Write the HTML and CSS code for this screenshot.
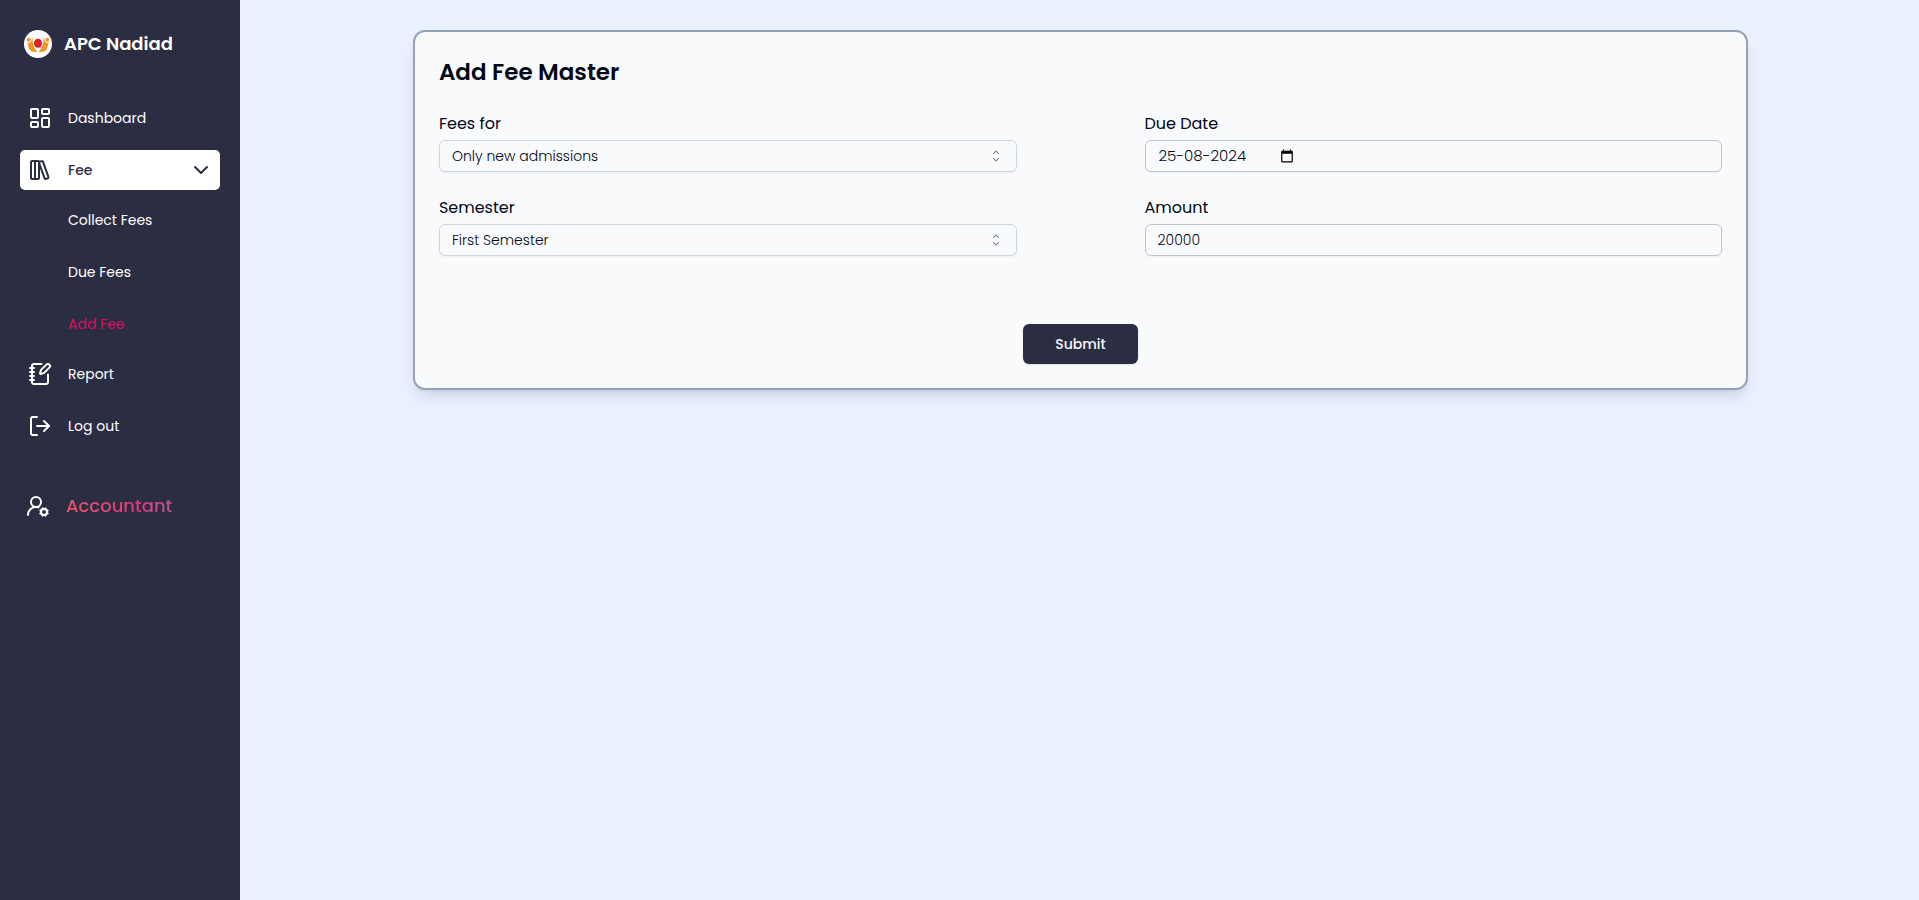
FILE: index.html
```html
<!DOCTYPE html>
<html lang="en">
<head>
<meta charset="utf-8">
<meta name="viewport" content="width=device-width, initial-scale=1">
<title>APC Nadiad - Add Fee</title>
<link rel="stylesheet" href="styles.css">
</head>
<body>
<div class="layout">
  <aside class="sidebar">
    <div class="brand">
      <svg class="brand-logo" viewBox="0 0 28 28" aria-hidden="true">
        <circle cx="14" cy="14" r="14" fill="#fff"/>
        <ellipse cx="14" cy="13.300" rx="4" ry="4.500" fill="#e31e24"/>
        <g fill="#f7941d">
          <circle cx="4.700" cy="9.800" r="2"/>
          <circle cx="23.300" cy="9.800" r="2"/>
          <path d="M3 12.400c1.700 1 3.400.4 4.200-1.400L8.800 6.800c-.7 5.800.4 10.400 4.700 14.800-3.700 1-6.900 0-8.300-2.600C4.400 17 4.200 14 3 12.400z"/>
          <path d="M25 12.400c-1.700 1-3.400.4-4.200-1.400L19.200 6.800c.7 5.800-.4 10.400-4.700 14.800 3.700 1 6.900 0 8.300-2.600.8-2 1-5 2.200-6.600z"/>
        </g>
      </svg>
      <span class="brand-name">APC Nadiad</span>
    </div>
    <nav class="nav" aria-label="Main">
      <a class="nav-item" href="#dashboard">
        <svg class="icon" viewBox="0 0 24 24" aria-hidden="true"><rect width="7" height="9" x="3" y="3" rx="1"/><rect width="7" height="5" x="14" y="3" rx="1"/><rect width="7" height="9" x="14" y="12" rx="1"/><rect width="7" height="5" x="3" y="16" rx="1"/></svg>
        <span>Dashboard</span>
      </a>
      <div class="nav-group">
        <button class="nav-item nav-item-open" type="button" aria-expanded="true">
          <svg class="icon" viewBox="0 0 24 24" aria-hidden="true"><rect width="8" height="18" x="3" y="3" rx="1"/><path d="M7 3v18"/><path d="M20.400 18.900c.2.5-.1 1.100-.6 1.300l-1.900.7c-.5.2-1.100-.1-1.300-.6L11.100 5.100c-.2-.5.1-1.100.6-1.300l1.900-.7c.5-.2 1.100.1 1.300.6Z"/></svg>
          <span>Fee</span>
          <svg class="icon icon-end" viewBox="0 0 24 24" aria-hidden="true"><path d="m6 9 6 6 6-6"/></svg>
        </button>
        <div class="subnav">
          <a class="subnav-item" href="#collect">Collect Fees</a>
          <a class="subnav-item" href="#due">Due Fees</a>
          <a class="subnav-item subnav-item-current" href="#add" aria-current="page">Add Fee</a>
        </div>
      </div>
      <a class="nav-item" href="#report">
        <svg class="icon" viewBox="0 0 24 24" aria-hidden="true"><path d="M13.400 2H6a2 2 0 0 0-2 2v16a2 2 0 0 0 2 2h12a2 2 0 0 0 2-2v-7.400"/><path d="M2 6h4"/><path d="M2 10h4"/><path d="M2 14h4"/><path d="M2 18h4"/><path d="M21.378 5.626a1 1 0 1 0-3.004-3.004l-5.010 5.012a2 2 0 0 0-.506.854l-.837 2.870a.5.5 0 0 0 .62.62l2.870-.837a2 2 0 0 0 .854-.506z"/></svg>
        <span>Report</span>
      </a>
      <a class="nav-item" href="#logout">
        <svg class="icon" viewBox="0 0 24 24" aria-hidden="true"><path d="M9 21H5a2 2 0 0 1-2-2V5a2 2 0 0 1 2-2h4"/><path d="m16 17 5-5-5-5"/><path d="M21 12H9"/></svg>
        <span>Log out</span>
      </a>
    </nav>
    <div class="role">
      <svg class="icon" viewBox="0 0 24 24" aria-hidden="true"><path d="M2 21a8 8 0 0 1 10.434-7.620"/><circle cx="10" cy="8" r="5"/><circle cx="18" cy="18" r="3"/><path d="m19.500 14.300-.4.9"/><path d="m16.900 20.800-.4.9"/><path d="m21.700 19.500-.9-.4"/><path d="m15.200 16.900-.9-.4"/><path d="m21.700 16.500-.9.4"/><path d="m15.200 19.100-.9.4"/><path d="m19.500 21.700-.4-.9"/><path d="m16.900 15.200-.4-.9"/></svg>
      <span class="role-name">Accountant</span>
    </div>
  </aside>
  <main class="main">
    <form class="card">
      <h1 class="card-title">Add Fee Master</h1>
      <div class="fields">
        <div class="field">
          <label class="label" for="fees-for">Fees for</label>
          <div class="select-wrap">
            <select class="control control-select" id="fees-for"><option>Only new admissions</option></select>
            <svg class="caret" viewBox="0 0 15 15" aria-hidden="true"><path d="M4.900 5.400 7.500 2.800l2.600 2.600M4.900 9.600l2.600 2.600 2.600-2.600"/></svg>
          </div>
        </div>
        <div class="field">
          <label class="label" for="due-date">Due Date</label>
          <div class="control control-date">
            <input class="date-input" id="due-date" type="text" inputmode="numeric" value="25-08-2024">
            <button class="date-button" type="button" aria-label="Open calendar">
              <svg class="date-icon" viewBox="0 0 24 24" aria-hidden="true"><path d="M20 3h-1V1h-2v2H7V1H5v2H4c-1.100 0-2 .9-2 2v16c0 1.100.9 2 2 2h16c1.100 0 2-.9 2-2V5c0-1.100-.9-2-2-2zm0 18H4V8h16v13z"/></svg>
            </button>
          </div>
        </div>
        <div class="field">
          <label class="label" for="semester">Semester</label>
          <div class="select-wrap">
            <select class="control control-select" id="semester"><option>First Semester</option></select>
            <svg class="caret" viewBox="0 0 15 15" aria-hidden="true"><path d="M4.900 5.400 7.500 2.800l2.600 2.600M4.900 9.600l2.600 2.600 2.600-2.600"/></svg>
          </div>
        </div>
        <div class="field">
          <label class="label" for="amount">Amount</label>
          <input class="control" id="amount" type="text" inputmode="numeric" value="20000">
        </div>
      </div>
      <button class="submit" type="submit">Submit</button>
    </form>
  </main>
</div>
</body>
</html>
```
FILE: styles.css
```css
* { box-sizing: border-box; }

body {
  margin: 0;
  font-family: Poppins, Inter, "Liberation Sans", sans-serif;
  font-size: 14px;
  line-height: 24px;
  color: #020817;
}

button, input, select { font: inherit; color: inherit; }

.layout {
  display: flex;
  min-height: 100vh;
  background: #e9f1ff;
}

.sidebar {
  flex: none;
  width: 240px;
  padding: 30px 20px;
  background: #2b2d42;
  color: #fff;
}

.brand {
  display: flex;
  align-items: center;
  gap: 12px;
  padding-left: 4px;
  margin-bottom: 40px;
}

.brand-logo { width: 28px; height: 28px; }

.brand-name { font-size: 18px; font-weight: 600; }

.nav {
  display: flex;
  flex-direction: column;
  gap: 12px;
}

.nav-item {
  display: flex;
  align-items: center;
  gap: 16px;
  width: 100%;
  height: 40px;
  padding: 0 7px 0 8px;
  border: 0;
  border-radius: 5px;
  background: none;
  color: #fff;
  text-decoration: none;
}

.nav-item-open {
  background: #fff;
  color: #2b2d42;
  font-weight: 500;
}

.nav-group { margin-bottom: -2px; }

.subnav {
  display: flex;
  flex-direction: column;
  gap: 12px;
  padding-top: 10px;
}

.subnav-item {
  height: 40px;
  padding: 8px 0 8px 48px;
  color: #fff;
  text-decoration: none;
}

.subnav-item-current { color: #d90f5c; }

.icon {
  flex: none;
  width: 24px;
  height: 24px;
  fill: none;
  stroke: currentColor;
  stroke-width: 2;
  stroke-linecap: round;
  stroke-linejoin: round;
}

.icon-end { margin-left: auto; }

.role {
  display: flex;
  align-items: center;
  gap: 16px;
  margin-top: 48px;
  padding-left: 6px;
}

.role-name {
  font-size: 18px;
  font-weight: 500;
  background: linear-gradient(to right, #e8556a, #e0367f 70%, #b8559a);
  -webkit-background-clip: text;
  background-clip: text;
  color: transparent;
}

.main {
  flex: 1;
  padding: 30px 4px 30px 6px;
}

.card {
  display: flex;
  flex-direction: column;
  width: 80%;
  margin: 0 auto;
  padding: 24px;
  border: 2px solid #94a3b8;
  border-radius: 12px;
  background: #f8fafc;
  box-shadow: 0 10px 15px -3px rgba(0, 0, 0, 0.1), 0 4px 6px -4px rgba(0, 0, 0, 0.1);
}

.card-title {
  margin: 0 0 24px;
  font-size: 23px;
  line-height: 32px;
  font-weight: 600;
}

.fields {
  display: grid;
  grid-template-columns: 1fr 1fr;
  gap: 24px 128px;
}

.field {
  display: flex;
  flex-direction: column;
  gap: 4px;
}

.label { font-size: 16px; }

.control {
  width: 100%;
  height: 32px;
  padding: 0 12px;
  border: 1px solid #c2c5cc;
  border-radius: 6px;
  background: transparent;
  box-shadow: 0 1px 2px rgba(0, 0, 0, 0.05);
  font-weight: 300;
}

.select-wrap {
  display: grid;
  align-items: center;
}

.select-wrap > * { grid-area: 1 / 1; }

.control-select {
  appearance: none;
  border-color: #d1d4da;
}

.caret {
  justify-self: end;
  width: 16px;
  height: 16px;
  margin-right: 13px;
  fill: none;
  stroke: currentColor;
  opacity: 0.5;
  pointer-events: none;
}

.control-date {
  display: flex;
  align-items: center;
  padding: 0 13px;
}

.date-input {
  width: 121px;
  padding: 0;
  border: 0;
  background: none;
  font-size: 15px;
}

.date-button {
  display: flex;
  padding: 0;
  border: 0;
  background: none;
  color: #000;
}

.date-icon { width: 14px; height: 14px; fill: currentColor; }

.submit {
  align-self: center;
  height: 40px;
  margin-top: 68px;
  padding: 0 32px;
  border: 0;
  border-radius: 6px;
  background: #2b2d42;
  box-shadow: 0 1px 2px rgba(0, 0, 0, 0.1);
  color: #f8fafc;
  font-weight: 500;
}
```
